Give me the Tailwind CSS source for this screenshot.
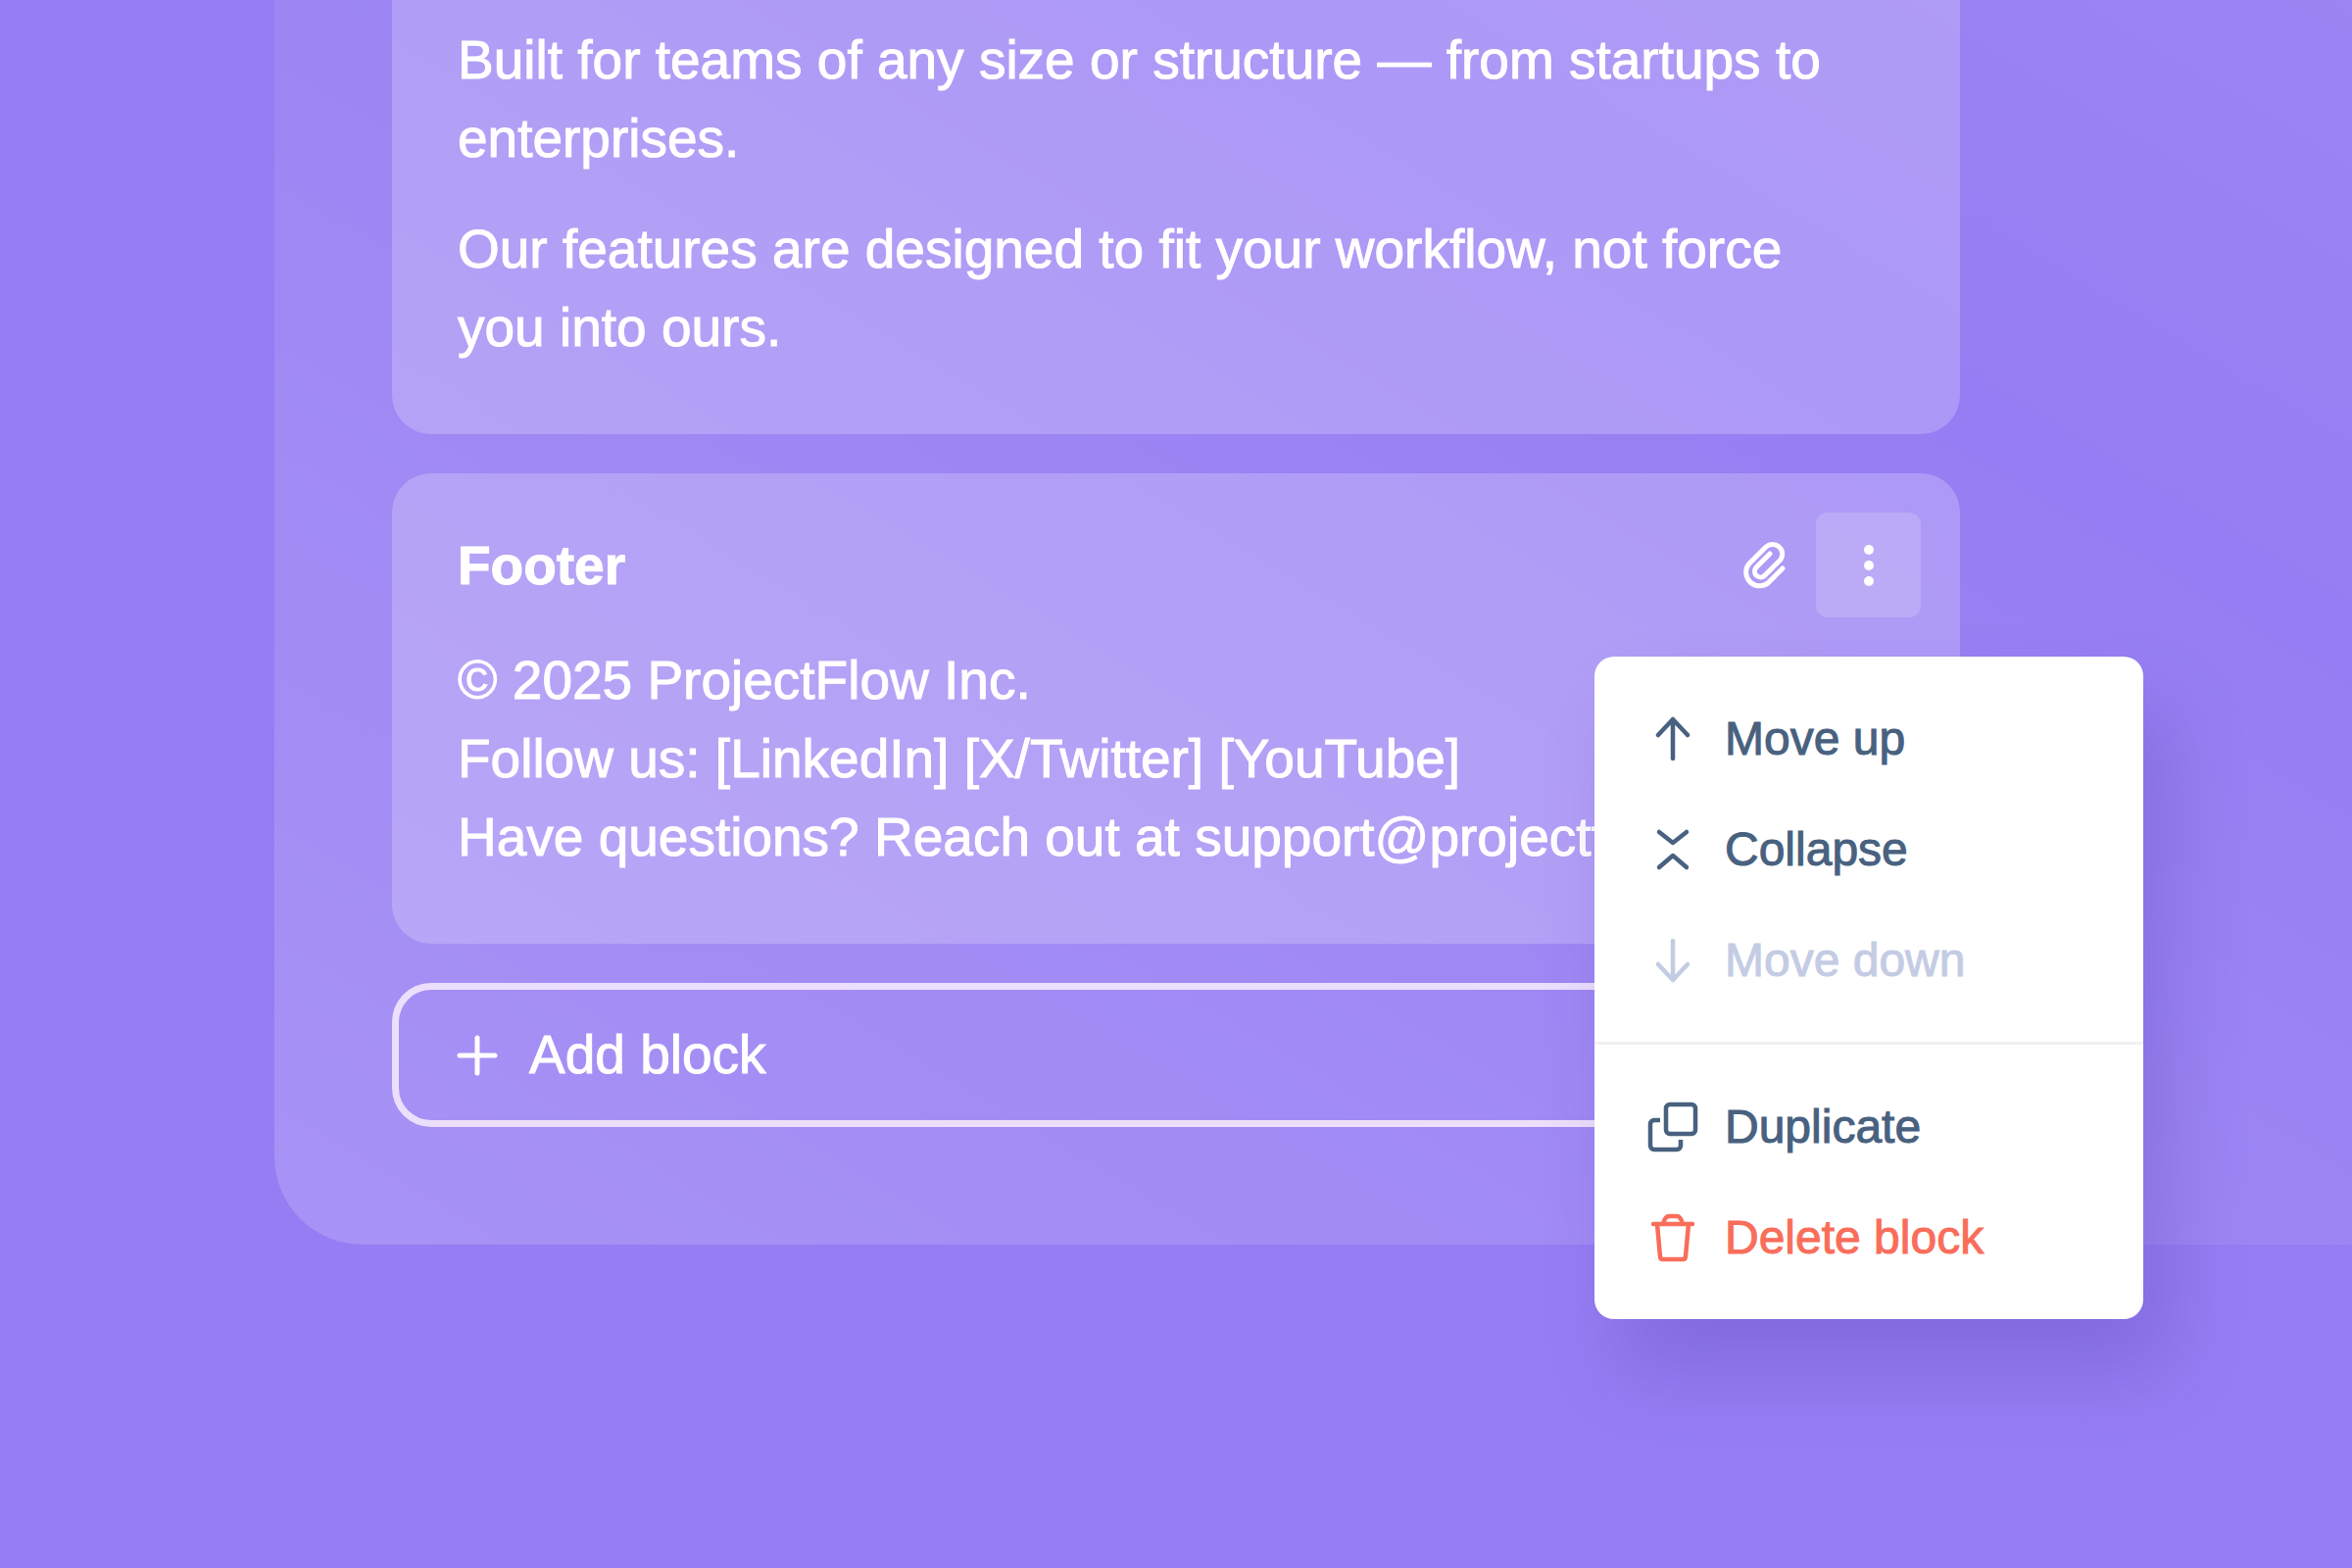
<!doctype html>
<html lang="en">
    <head>
        <meta charset="UTF-8" />
        <meta name="viewport" content="width=device-width, initial-scale=1.0" />
        <title>Block editor</title>
        <script src="https://cdn.jsdelivr.net/npm/@tailwindcss/browser@4"></script>
    </head>

    <body
        class="min-h-screen overflow-hidden bg-[#967df3] font-['Liberation_Sans',Arial,sans-serif] text-white [-webkit-text-stroke:1px_currentColor]"
    >
        <!-- Editor panel, runs off the right edge -->
        <main
            class="ml-[280px] rounded-bl-[90px] bg-[linear-gradient(to_top_right,rgba(255,255,255,0.17)_0%,rgba(255,255,255,0.08)_45%,rgba(255,255,255,0)_74%,rgba(255,255,255,0.06)_100%)] pr-[400px] pb-[120px] pl-[120px]"
        >
            <div class="flex flex-col gap-10">
                <section
                    class="flex flex-col gap-[33px] rounded-b-[40px] bg-white/21 pt-[21px] pr-[120px] pb-[69px] pl-[67px] text-[55px] leading-[80px]"
                >
                    <p>
                        Built for teams of any size or structure — from startups
                        to enterprises.
                    </p>
                    <p>
                        Our features are designed to fit your workflow, not
                        force you into ours.
                    </p>
                </section>

                <section
                    class="relative rounded-[40px] bg-white/21 pt-10 pr-10 pb-[69px] pl-[67px]"
                >
                    <header class="mb-6 flex items-center">
                        <h2 class="grow text-[55px] leading-[80px] font-bold">
                            Footer
                        </h2>
                        <button
                            type="button"
                            aria-label="Attach file"
                            class="grid size-[107px] place-items-center rounded-xl"
                        >
                            <svg
                                class="size-[54px]"
                                viewBox="0 0 54 54"
                                fill="none"
                                stroke="currentColor"
                                stroke-width="5"
                                stroke-linecap="round"
                            >
                                <path
                                    d="M46 30 L33 43 A13 13 0 0 1 12 25 L29 8 A10 10 0 0 1 44 21 L28 37 A6 6 0 0 1 19 29 L33 15"
                                />
                            </svg>
                        </button>
                        <button
                            type="button"
                            aria-label="Block actions"
                            aria-expanded="true"
                            class="grid size-[107px] place-items-center rounded-xl bg-white/16"
                        >
                            <svg
                                class="size-[54px]"
                                viewBox="0 0 54 54"
                                fill="currentColor"
                            >
                                <circle cx="27" cy="11" r="5" />
                                <circle cx="27" cy="27" r="5" />
                                <circle cx="27" cy="43" r="5" />
                            </svg>
                        </button>
                    </header>
                    <div class="text-[55px] leading-[80px] whitespace-nowrap">
                        <p>© 2025 ProjectFlow Inc.</p>
                        <p>Follow us: [LinkedIn] [X/Twitter] [YouTube]</p>
                        <p>Have questions? Reach out at support@projectf</p>
                    </div>

                    <!-- Block actions menu -->
                    <div
                        role="menu"
                        class="absolute top-[187px] right-[-187px] z-10 w-[560px] rounded-[20px] bg-white text-[48px] leading-[60px] text-[#48617f] shadow-[27px_53px_80px_rgba(70,50,160,0.24)]"
                    >
                        <div class="flex flex-col py-[27px]">
                            <button
                                type="button"
                                role="menuitem"
                                class="flex h-[113px] items-center gap-[26px] px-[53px]"
                            >
                                <svg
                                    class="size-[54px]"
                                    viewBox="0 0 54 54"
                                    fill="none"
                                    stroke="currentColor"
                                    stroke-width="4.500"
                                    stroke-linecap="round"
                                    stroke-linejoin="round"
                                >
                                    <path d="M27 47 V7 M12 23 L27 7 L42 23" />
                                </svg>
                                Move up
                            </button>
                            <button
                                type="button"
                                role="menuitem"
                                class="flex h-[113px] items-center gap-[26px] px-[53px]"
                            >
                                <svg
                                    class="size-[54px]"
                                    viewBox="0 0 54 54"
                                    fill="none"
                                    stroke="currentColor"
                                    stroke-width="4.500"
                                    stroke-linecap="round"
                                    stroke-linejoin="round"
                                >
                                    <path
                                        d="M13 9 L27 20 L41 9 M13 45 L27 33 L41 45"
                                    />
                                </svg>
                                Collapse
                            </button>
                            <button
                                type="button"
                                role="menuitem"
                                disabled
                                class="flex h-[113px] items-center gap-[26px] px-[53px] text-[#c4cce4]"
                            >
                                <svg
                                    class="size-[54px]"
                                    viewBox="0 0 54 54"
                                    fill="none"
                                    stroke="currentColor"
                                    stroke-width="4.500"
                                    stroke-linecap="round"
                                    stroke-linejoin="round"
                                >
                                    <path d="M27 7 V47 M12 31 L27 47 L42 31" />
                                </svg>
                                Move down
                            </button>
                        </div>
                        <div
                            class="flex flex-col border-t-3 border-[#f3eff4] py-[27px]"
                        >
                            <button
                                type="button"
                                role="menuitem"
                                class="flex h-[113px] items-center gap-[26px] px-[53px]"
                            >
                                <svg
                                    class="size-[54px]"
                                    viewBox="0 0 54 54"
                                    fill="none"
                                    stroke="currentColor"
                                    stroke-width="4.500"
                                >
                                    <rect
                                        x="20"
                                        y="4"
                                        width="30"
                                        height="30"
                                        rx="4"
                                    />
                                    <path
                                        d="M14 20 H8 A4 4 0 0 0 4 24 V46 A4 4 0 0 0 8 50 H31 A4 4 0 0 0 35 46 V40"
                                    />
                                </svg>
                                Duplicate
                            </button>
                            <button
                                type="button"
                                role="menuitem"
                                class="flex h-[113px] items-center gap-[26px] px-[53px] text-[#f96d5b]"
                            >
                                <svg
                                    class="size-[54px]"
                                    viewBox="0 0 54 54"
                                    fill="none"
                                    stroke="currentColor"
                                    stroke-width="4.500"
                                    stroke-linecap="round"
                                    stroke-linejoin="round"
                                >
                                    <path
                                        d="M7 13 H47 M17 13 Q19 5 23 5 H31 Q35 5 37 13 M11 13 L14 46 Q14 49 17 49 H37 Q40 49 40 46 L43 13"
                                    />
                                </svg>
                                Delete block
                            </button>
                        </div>
                    </div>
                </section>

                <button
                    type="button"
                    class="flex h-[147px] items-center gap-[26px] rounded-[40px] border-7 border-[#ecdffc] px-[53px] text-[55px]"
                >
                    <svg
                        class="size-[54px]"
                        viewBox="0 0 54 54"
                        fill="none"
                        stroke="currentColor"
                        stroke-width="5"
                        stroke-linecap="round"
                    >
                        <path d="M27 9 V45 M9 27 H45" />
                    </svg>
                    Add block
                </button>
            </div>
        </main>
    </body>
</html>
